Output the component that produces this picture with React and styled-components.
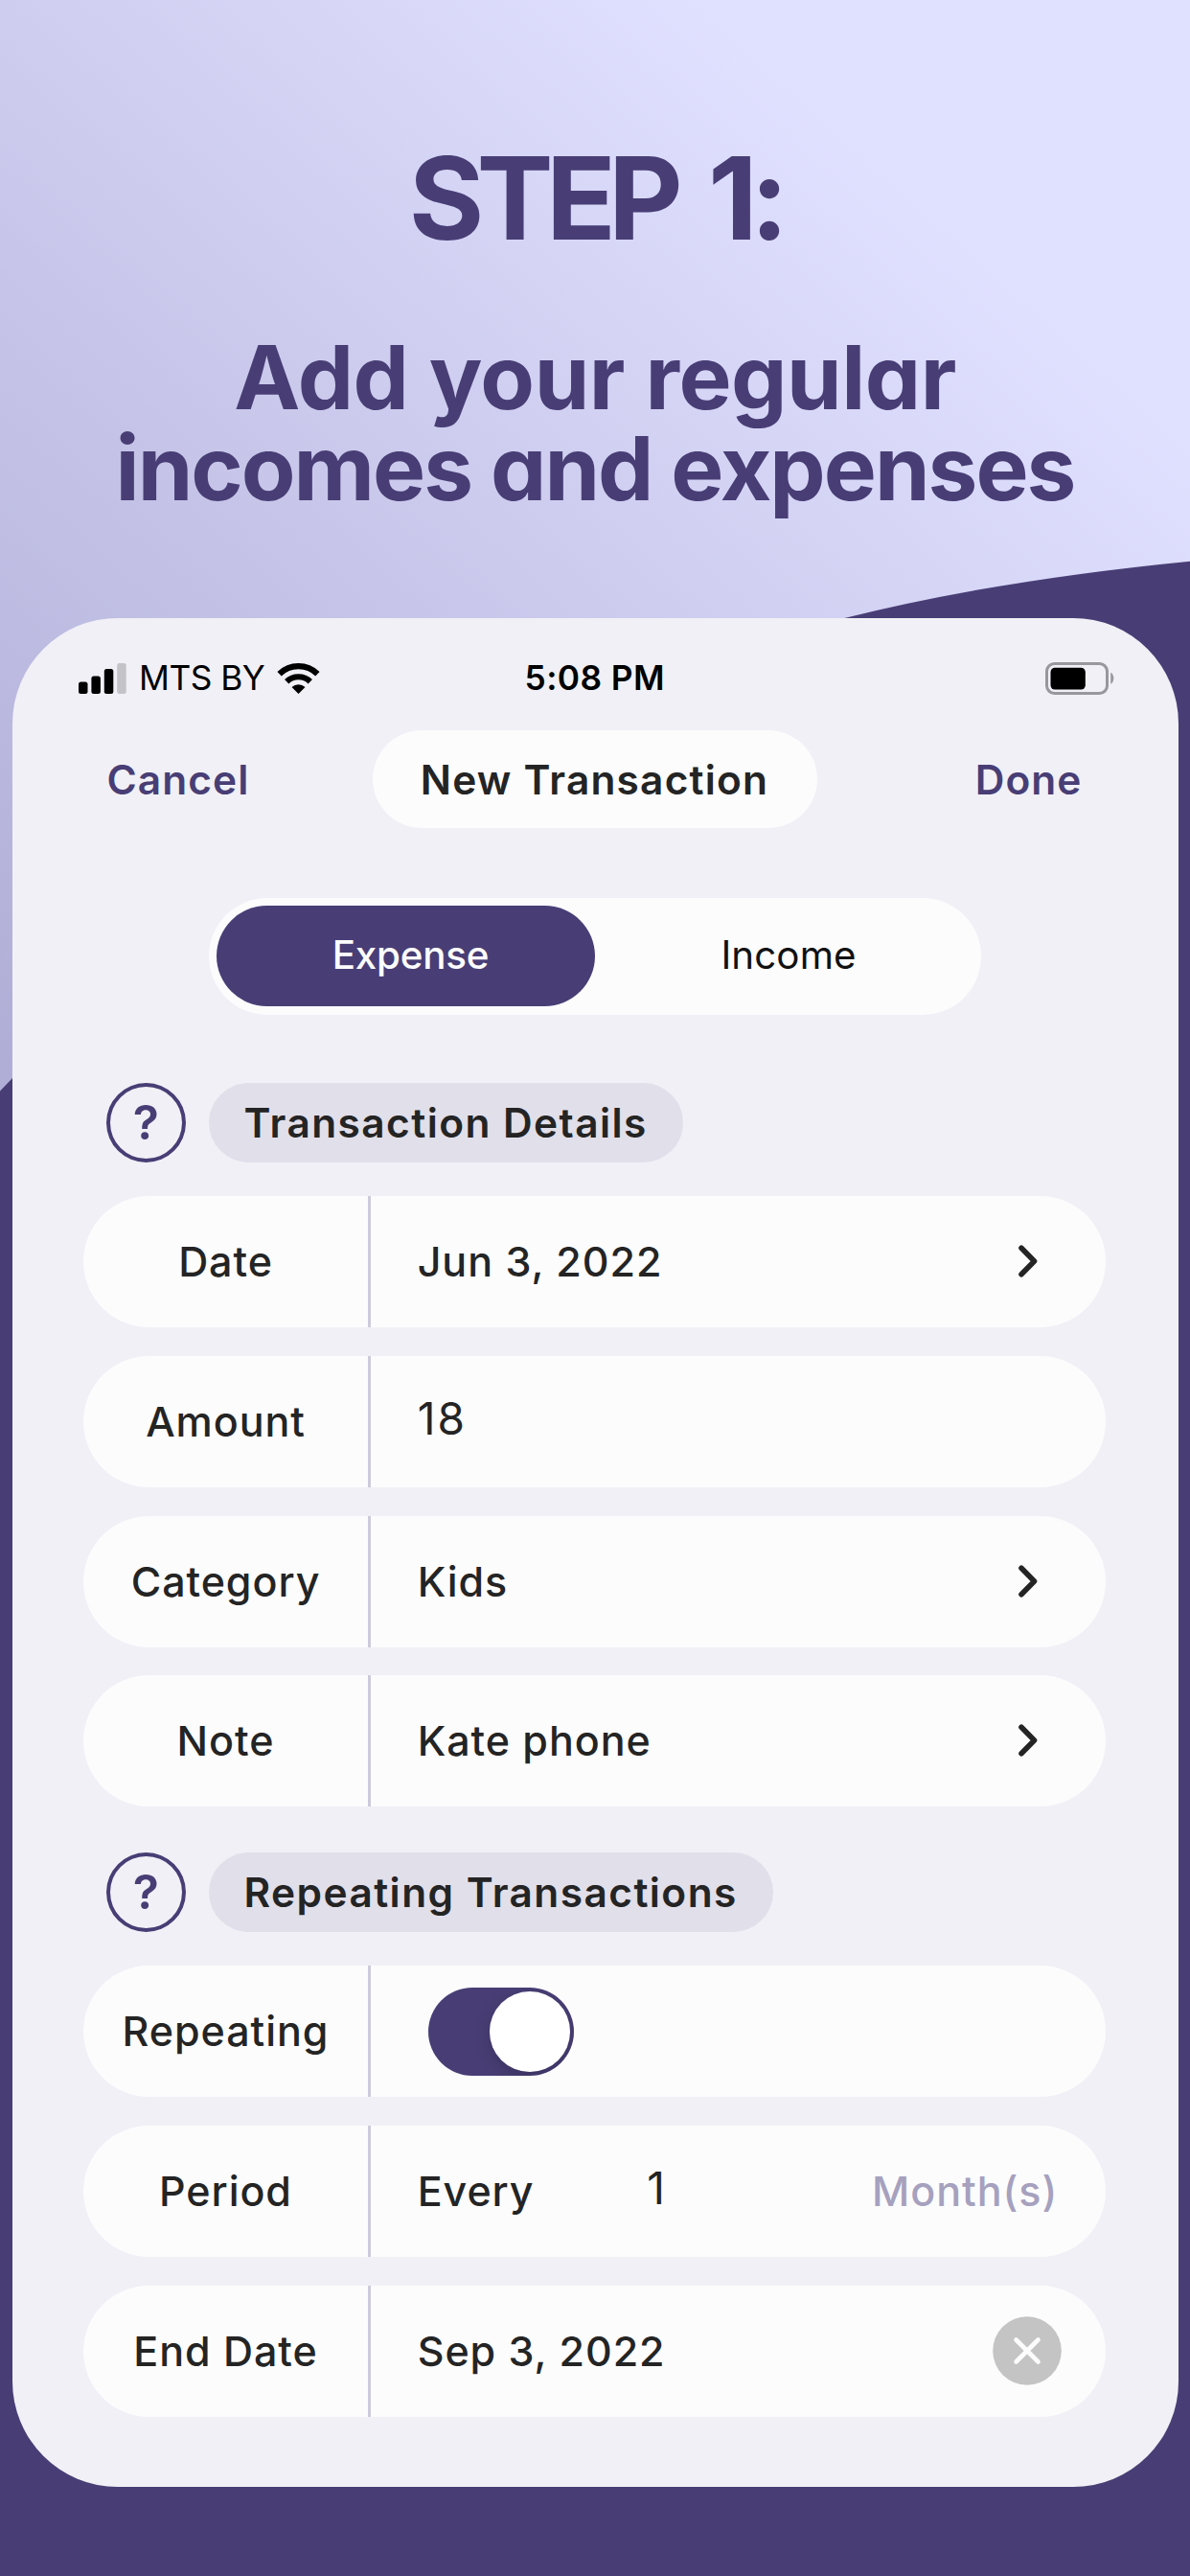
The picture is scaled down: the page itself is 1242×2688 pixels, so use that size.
import styled, { createGlobalStyle } from 'styled-components'

const GlobalStyle = createGlobalStyle`
  * {
    box-sizing: border-box;
  }

  body {
    margin: 0;
    font-family: Inter, 'Liberation Sans', sans-serif;
    color: #242424;
  }
`

const Page = styled.main`
  position: relative;
  width: 1242px;
  height: 2688px;
  overflow: hidden;
  display: flex;
  flex-direction: column;
  align-items: center;
  background: linear-gradient(42deg, #b0aed6 1180px, #e0e0ff 2485px);
`

const Wave = styled.svg`
  position: absolute;
  inset: 0;
`

const Hero = styled.header`
  position: relative;
  height: 645.4px;
  flex: none;
  padding-top: 146.6px;
  text-align: center;
  color: #483e75;
  font-feature-settings: 'cv11';
`

const Step = styled.h1`
  margin: 0 0 79px;
  font-size: 120px;
  line-height: 120px;
  font-weight: 750;
  letter-spacing: -7.7px;
  word-spacing: 13px;
`

const Tagline = styled.h2`
  margin: 0;
  font-size: 92.6px;
  line-height: 95px;
  font-weight: 700;
  white-space: nowrap;
  letter-spacing: -0.5px;
`

const Tight = styled.span`
  letter-spacing: -2px;
`

const Screen = styled.section`
  position: relative;
  width: 1217px;
  height: 1950px;
  flex: none;
  border-radius: 110px;
  background: #f1f0f6;
  display: flex;
  flex-direction: column;
`

const StatusBar = styled.div`
  height: 117px;
  padding: 8px 67px 0 69.5px;
  display: grid;
  grid-template-columns: 1fr auto 1fr;
  align-items: center;
  font-size: 35.3px;
  color: #000;
`

const Carrier = styled.div`
  display: flex;
  align-items: center;
  gap: 13px;
  white-space: nowrap;
  letter-spacing: -0.5px;
`

const Time = styled.span`
  margin-right: 3px;
  font-weight: 600;
  letter-spacing: 0.4px;
`

const BatterySlot = styled.div`
  display: flex;
  justify-content: flex-end;
`

const NavBar = styled.nav`
  height: 101.4px;
  padding: 0 100px 0 99px;
  display: grid;
  grid-template-columns: 1fr auto 1fr;
  align-items: center;
`

const NavButton = styled.button`
  justify-self: ${({ $end }) => ($end ? 'end' : 'start')};
  padding: 0;
  border: 0;
  background: none;
  font: 600 42.4px Inter, sans-serif;
  letter-spacing: 1.1px;
  color: #483e75;
`

const Title = styled.div`
  width: 464px;
  height: 101.4px;
  border-radius: 51px;
  background: #fcfcfd;
  display: flex;
  align-items: center;
  justify-content: center;
  font-size: 42.4px;
  font-weight: 600;
  letter-spacing: 1.2px;
`

const Segmented = styled.div`
  width: 806.5px;
  height: 122px;
  margin: 73px 0 0 205px;
  padding: 8.7px;
  border-radius: 61px;
  background: #fcfcfd;
  display: flex;
`

const Segment = styled.div`
  flex: 1;
  padding: 0 0 2px 10px;
  border-radius: 53px;
  display: flex;
  align-items: center;
  justify-content: center;
  font-size: 40.3px;
  font-weight: ${({ $active }) => ($active ? 500 : 400)};
  letter-spacing: ${({ $active }) => ($active ? -0.2 : 0.1)}px;
  color: ${({ $active }) => ($active ? '#fcfcfd' : '#111')};
  background: ${({ $active }) => ($active ? '#483e75' : 'none')};
`

const SectionHead = styled.div`
  display: flex;
  gap: 23.5px;
  margin: ${({ $top }) => $top}px 0 35.3px 98px;
  height: 83.3px;
`

const Help = styled.span`
  width: 83.5px;
  border: 4.5px solid #483e75;
  border-radius: 50%;
  display: flex;
  align-items: center;
  justify-content: center;
  font-size: 50px;
  font-weight: 600;
  color: #483e75;
`

const Tag = styled.h3`
  margin: 0;
  padding: 0 37px;
  border-radius: 42px;
  background: #e1dfea;
  display: flex;
  align-items: center;
  font-size: 42.4px;
  font-weight: 600;
  letter-spacing: 1.45px;
`

const Rows = styled.div`
  display: flex;
  flex-direction: column;
  gap: 29.6px;
  padding: 0 75.3px 0 74.3px;
`

const Row = styled.div`
  height: 137px;
  border-radius: 69px;
  background: #fcfcfd;
  display: flex;
  font-size: 43px;
  font-weight: 500;
  letter-spacing: 0.95px;
  white-space: nowrap;
`

const Label = styled.div`
  width: 300.4px;
  padding-bottom: 1px;
  border-right: 3px solid #cdcadb;
  display: flex;
  align-items: center;
  justify-content: center;
`

const Value = styled.div`
  flex: 1;
  padding: 0 46px 1px 48.5px;
  display: flex;
  align-items: center;
`

const Field = styled.span`
  width: ${({ $width }) => $width}px;
  padding-bottom: 5px;
  text-align: ${({ $align }) => $align || 'left'};
  font-size: 46px;
  font-weight: 400;
  letter-spacing: 2px;
`

const Unit = styled.span`
  margin: 0 4px 0 auto;
  color: #a6a1be;
`

const Chevron = styled.svg`
  margin: 0 25px 0 auto;
`

const Toggle = styled.div`
  width: 152px;
  height: 92.5px;
  margin: 1px 0 0 11.5px;
  padding: 4.5px;
  border-radius: 47px;
  overflow: hidden;
  background: #483e75;
  display: flex;
  justify-content: flex-end;
`

const Knob = styled.span`
  width: 83.5px;
  height: 83.5px;
  border-radius: 50%;
  background: #fff;
  box-shadow: 0 6px 16px rgba(0, 0, 0, 0.18);
`

const Clear = styled.svg`
  margin-left: auto;
`

const SignalIcon = () => (
  <svg width="50" height="32" viewBox="0 0 50 32">
    <rect x="0" y="19.5" width="9.5" height="12.5" rx="2.5" />
    <rect x="13.4" y="13.5" width="9.5" height="18.5" rx="2.5" />
    <rect x="26.8" y="6" width="9.5" height="26" rx="2.5" />
    <rect x="40.2" y="0" width="9.5" height="32" rx="2.5" fill="#c4c3c8" />
  </svg>
)

const WifiIcon = () => (
  <svg width="45" height="33" viewBox="0 0 45 33">
    <g fill="none" stroke="#000" strokeWidth="6.2">
      <path d="M2.6 12.2a28.5 28.5 0 0 1 39.8 0" />
      <path d="M10.2 20.3a17.5 17.5 0 0 1 24.6 0" />
    </g>
    <path d="M22.5 33l-7-7.1a10.4 10.4 0 0 1 14 0z" />
  </svg>
)

const BatteryIcon = () => (
  <svg width="72" height="34" viewBox="0 0 72 34">
    <rect x="1.5" y="1.5" width="63" height="31" rx="8" fill="none" stroke="#98979b" strokeWidth="3" />
    <rect x="5.5" y="5.7" width="36.3" height="22.8" rx="4.5" />
    <path d="M68.2 10.7c4.2 2 4.2 10 0 12z" fill="#98979b" />
  </svg>
)

const ChevronIcon = () => (
  <Chevron width="20" height="34" viewBox="0 0 20 34">
    <path
      d="M3 3.3l13.5 13.7l-13.5 13.7"
      fill="none"
      stroke="#242424"
      strokeWidth="5.6"
      strokeLinecap="round"
      strokeLinejoin="round"
    />
  </Chevron>
)

const ClearIcon = () => (
  <Clear width="72" height="72" viewBox="0 0 72 72">
    <circle cx="36" cy="36" r="35.8" fill="#c4c4c4" />
    <path
      d="M24.5 24.5l23 23M47.5 24.5l-23 23"
      stroke="#fcfcfd"
      strokeWidth="4.6"
      strokeLinecap="round"
    />
  </Clear>
)

const SectionTitle = ({ top, children }) => (
  <SectionHead $top={top}>
    <Help>?</Help>
    <Tag>{children}</Tag>
  </SectionHead>
)

const FormRow = ({ label, children }) => (
  <Row>
    <Label>{label}</Label>
    <Value>{children}</Value>
  </Row>
)

const App = () => (
  <Page>
    <GlobalStyle />
    <Wave width="1242" height="2688" viewBox="0 0 1242 2688">
      <path
        d="M0 1138.5C190 936 480 750 880.4 645.3Q1036 606 1242 585.7V2688H0z"
        fill="#483e75"
      />
    </Wave>
    <Hero>
      <Step>STEP 1:</Step>
      <Tagline>
        Add your regular
        <br />
        <Tight>incomes and expenses</Tight>
      </Tagline>
    </Hero>
    <Screen>
      <StatusBar>
        <Carrier>
          <SignalIcon />
          MTS BY
          <WifiIcon />
        </Carrier>
        <Time>5:08 PM</Time>
        <BatterySlot>
          <BatteryIcon />
        </BatterySlot>
      </StatusBar>
      <NavBar>
        <NavButton>Cancel</NavButton>
        <Title>New Transaction</Title>
        <NavButton $end>Done</NavButton>
      </NavBar>
      <Segmented>
        <Segment $active>Expense</Segment>
        <Segment>Income</Segment>
      </Segmented>
      <SectionTitle top={71}>Transaction Details</SectionTitle>
      <Rows>
        <FormRow label="Date">
          Jun 3, 2022
          <ChevronIcon />
        </FormRow>
        <FormRow label="Amount">
          <Field $width={300}>18</Field>
        </FormRow>
        <FormRow label="Category">
          Kids
          <ChevronIcon />
        </FormRow>
        <FormRow label="Note">
          Kate phone
          <ChevronIcon />
        </FormRow>
      </Rows>
      <SectionTitle top={47.6}>Repeating Transactions</SectionTitle>
      <Rows>
        <FormRow label="Repeating">
          <Toggle>
            <Knob />
          </Toggle>
        </FormRow>
        <FormRow label="Period">
          Every
          <Field $width={256} $align="center">1</Field>
          <Unit>Month(s)</Unit>
        </FormRow>
        <FormRow label="End Date">
          Sep 3, 2022
          <ClearIcon />
        </FormRow>
      </Rows>
    </Screen>
  </Page>
)

export default App
